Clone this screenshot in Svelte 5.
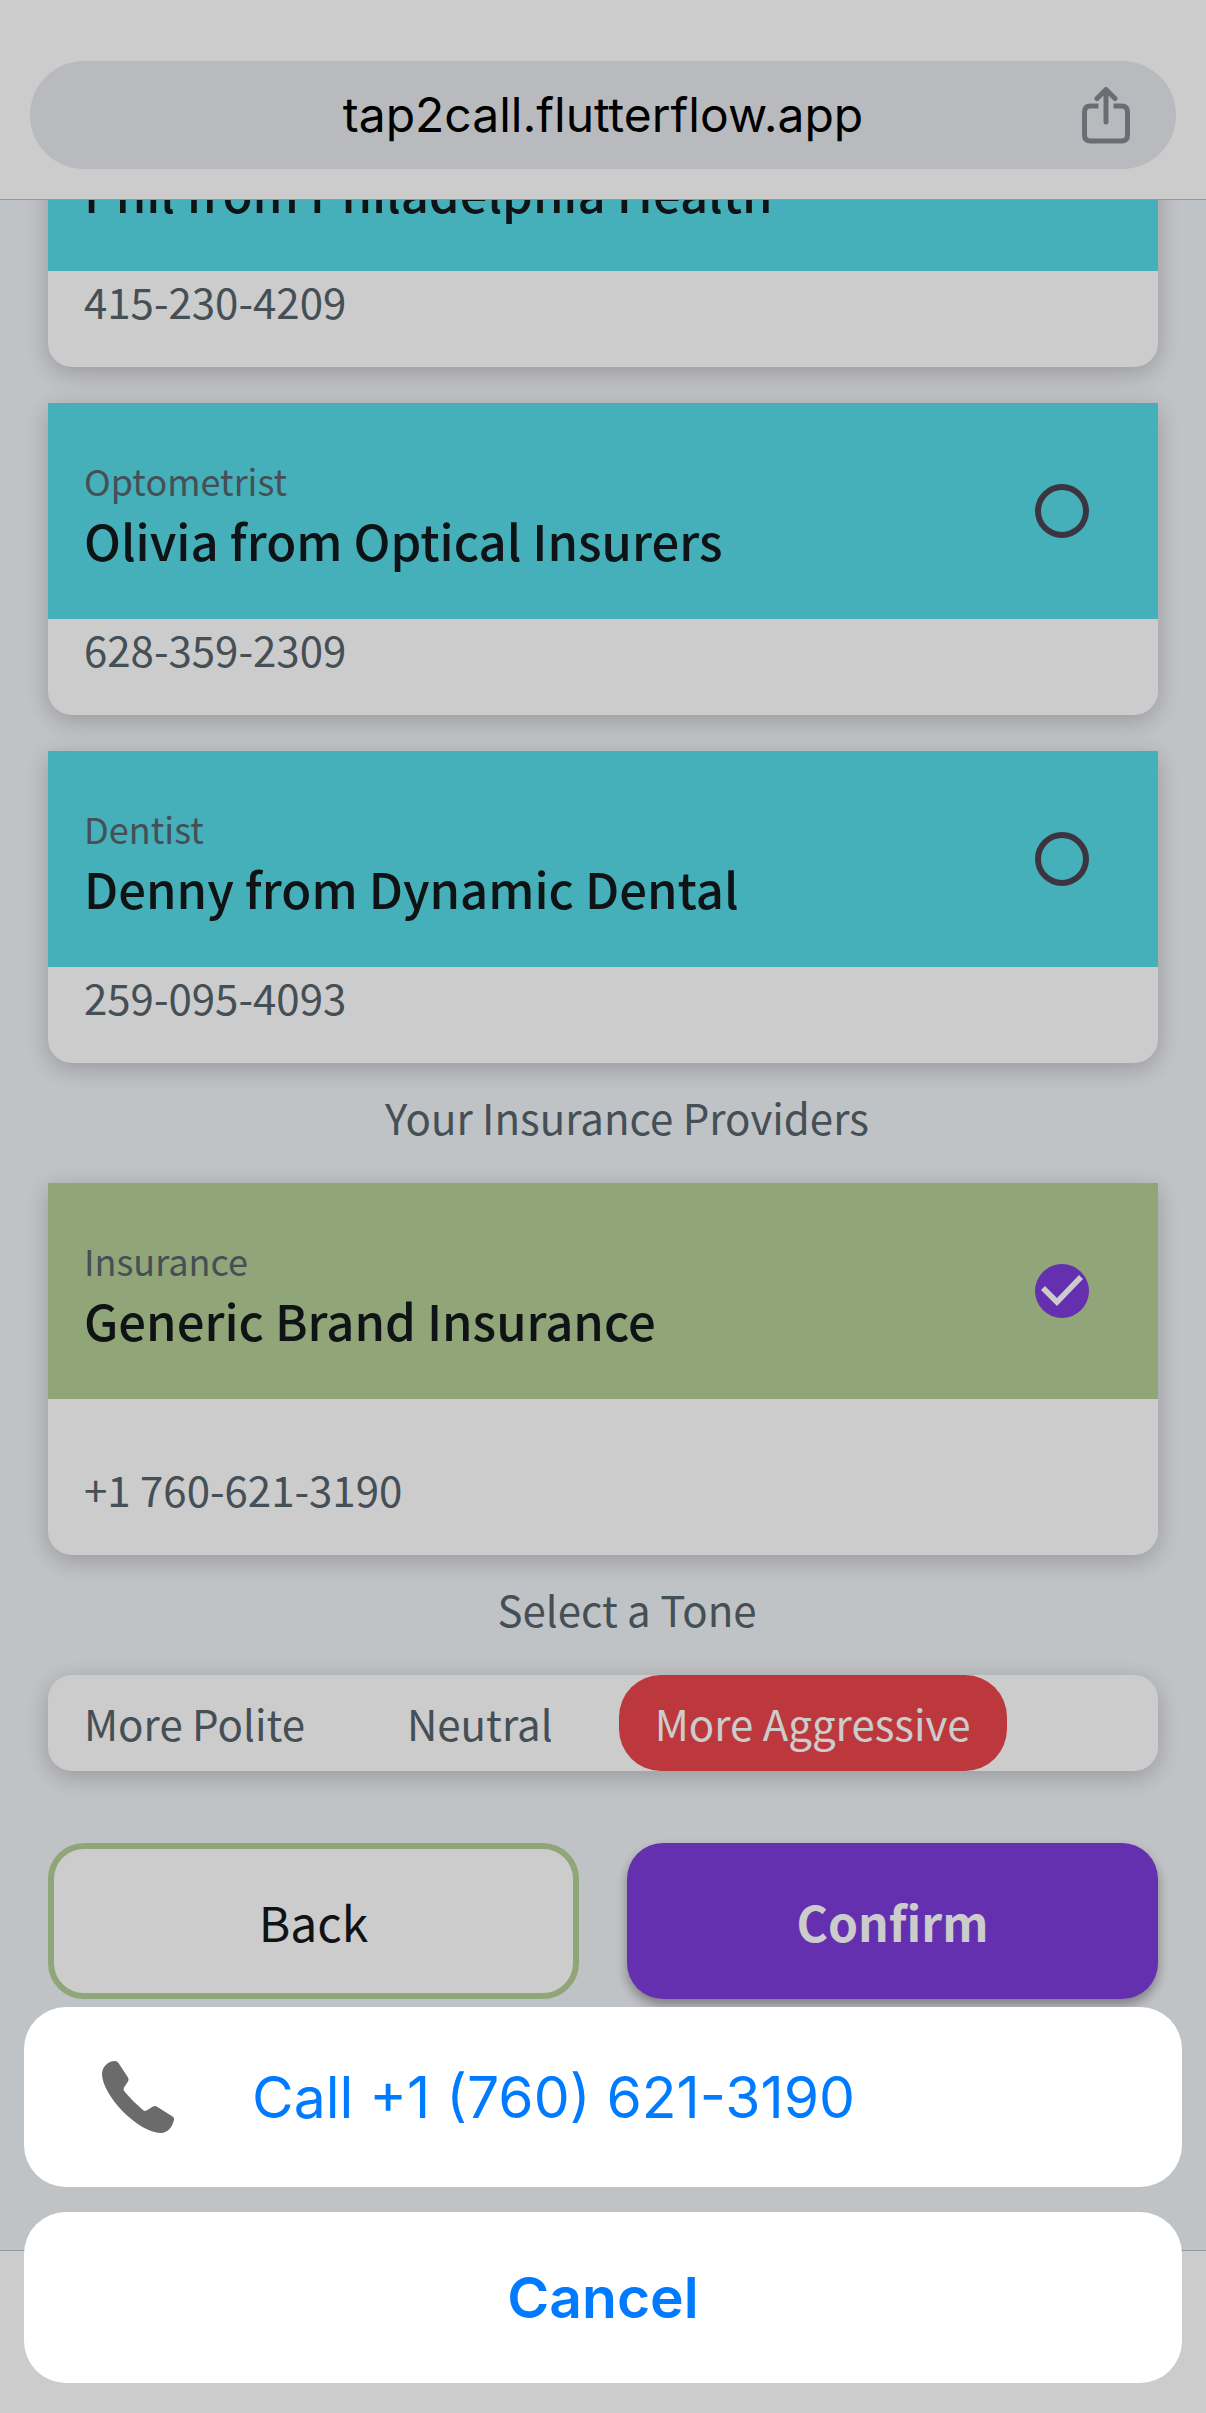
<script lang="ts">
  interface Provider {
    category?: string;
    name: string;
    phone: string;
  }

  const doctors: Provider[] = [
    { name: 'Phil from Philadelphia Health', phone: '415-230-4209' },
    { category: 'Optometrist', name: 'Olivia from Optical Insurers', phone: '628-359-2309' },
    { category: 'Dentist', name: 'Denny from Dynamic Dental', phone: '259-095-4093' }
  ];

  const insurers: Provider[] = [
    { category: 'Insurance', name: 'Generic Brand Insurance', phone: '+1 760-621-3190' }
  ];

  const tones = ['More Polite', 'Neutral', 'More Aggressive'];

  let selected: string[] = $state(['Generic Brand Insurance']);
  let tone: string = $state('More Aggressive');
  let sheetOpen: boolean = $state(true);
</script>

{#snippet card(provider: Provider, kind: string)}
  <article class="card {kind}">
    <label class="card-header">
      <span class="card-title">
        {#if provider.category}
          <span class="category">{provider.category}</span>
        {/if}
        <span class="name">{provider.name}</span>
      </span>
      {#if provider.category}
        <input type="checkbox" value={provider.name} bind:group={selected} />
      {/if}
    </label>
    <p class="phone">{provider.phone}</p>
  </article>
{/snippet}

<div class="screen">
  <header class="browser-bar">
    <div class="address">
      <span class="host">tap2call.flutterflow.app</span>
      <button class="share" aria-label="Share">
        <svg viewBox="0 0 48 57" width="48" height="57" fill="none" stroke="currentColor" stroke-width="5" stroke-linecap="round" stroke-linejoin="round">
          <path d="M24 35V3M15 11.500L24 2.500L33 11.500" />
          <path d="M16.500 19H8.500Q2.500 19 2.500 25V48Q2.500 54 8.500 54H39.500Q45.500 54 45.500 48V25Q45.500 19 39.500 19H31.500" stroke-linecap="butt" />
        </svg>
      </button>
    </div>
  </header>

  <div class="viewport">
    <main class="content">
      <div class="card-list">
        {#each doctors as doctor}
          {@render card(doctor, 'doctor')}
        {/each}
      </div>

      <h2>Your Insurance Providers</h2>
      <div class="card-list">
        {#each insurers as insurer}
          {@render card(insurer, 'insurer')}
        {/each}
      </div>

      <h2>Select a Tone</h2>
      <div class="tones">
        {#each tones as option}
          <button class="tone" class:active={tone === option} onclick={() => (tone = option)}>
            {option}
          </button>
        {/each}
      </div>

      <div class="actions">
        <button class="back">Back</button>
        <button class="confirm" onclick={() => (sheetOpen = true)}>Confirm</button>
      </div>
    </main>
  </div>

  <footer class="toolbar"></footer>
</div>

{#if sheetOpen}
  <div class="backdrop"></div>
  <div class="sheet">
    <a class="sheet-call" href="tel:+17606213190">
      <svg viewBox="0 0 72 72" width="72" height="72" fill="#6b6b6b">
        <path d="M0 13C0 6 6 0 13 0Q15 0 16.500 2L26 16.500Q27 18.500 26 20.500L22 26.500Q21 28.500 22.500 30.500Q31 41 41 49Q42.500 50.500 44.500 49.500L51 45.500Q53.500 44.500 55.500 46L70.500 55.500Q72.500 57 72 59C70 67 65 72 59 72C36 72 0 34 0 13Z" />
      </svg>
      <span>Call +1 (760) 621-3190</span>
    </a>
    <button class="sheet-cancel" onclick={() => (sheetOpen = false)}>Cancel</button>
  </div>
{/if}

<style>
  :global(body) {
    margin: 0;
    background: #f1f4f8;
  }

  .screen {
    display: flex;
    flex-direction: column;
    min-height: 100vh;
    color: #57636c;
    font-family: 'Noto Sans CJK SC', 'Noto Sans', sans-serif;
    font-size: 42px;
    line-height: 60px;
  }

  button {
    margin: 0;
    border: none;
    font: inherit;
    cursor: pointer;
  }

  .browser-bar {
    padding: 61px 30px 30px;
    background: #fff;
    border-bottom: 1px solid #bbbdc0;
  }

  .address {
    position: relative;
    display: flex;
    align-items: center;
    justify-content: center;
    height: 108px;
    border-radius: 54px;
    background: #e8e9ee;
    color: #000;
    font-family: Inter, 'Liberation Sans', sans-serif;
    font-size: 48px;
  }

  .share {
    position: absolute;
    right: 46px;
    padding: 0;
    background: none;
    color: #838a90;
    line-height: 0;
  }

  .viewport {
    flex: 1;
    overflow: hidden;
    background: #f1f4f8;
  }

  /* the list is scrolled a little under the browser bar */
  .content {
    margin-top: -87px;
    padding: 0 48px 48px;
  }

  .card-list {
    display: flex;
    flex-direction: column;
    gap: 36px;
  }

  .card {
    border-radius: 0 0 24px 24px;
    background: #fff;
    box-shadow: 0 6px 24px rgba(20, 0, 20, 0.22);
  }

  .card-header {
    display: flex;
    align-items: center;
    justify-content: space-between;
    padding: 48px 69px 48px 36px;
  }

  .doctor .card-header {
    background: #58dde9;
  }

  .insurer .card-header {
    background: #b4cf96;
  }

  .card-title {
    display: flex;
    flex-direction: column;
  }

  .category {
    font-size: 36px;
    line-height: 58px;
  }

  .name {
    color: #14181b;
    font-size: 49px;
    font-weight: 500;
    line-height: 62px;
  }

  input {
    appearance: none;
    flex: none;
    box-sizing: border-box;
    width: 54px;
    height: 54px;
    margin: 0;
    border: 6px solid #4b4351;
    border-radius: 50%;
  }

  input:checked {
    border: none;
    background: #7e3cdc;
  }

  input:checked::after {
    content: '';
    display: block;
    width: 54px;
    height: 54px;
    background: #fff;
    clip-path: polygon(6px 26px, 10px 22px, 22px 34px, 44px 11px, 48px 15px, 22px 42px);
  }

  .phone {
    margin: 0;
    padding: 0 36px 36px;
  }

  .insurer .phone {
    padding-top: 60px;
  }

  h2 {
    margin: 24px 0 36px;
    padding-left: 48px;
    font-size: 42px;
    font-weight: 400;
    text-align: center;
  }

  .tones {
    display: flex;
    gap: 30px;
    border-radius: 24px;
    background: #fff;
    box-shadow: 0 6px 24px rgba(20, 0, 20, 0.22);
  }

  .tone {
    padding: 18px 36px;
    border-radius: 42px;
    background: none;
    color: #57636c;
  }

  .tone.active {
    background: #eb464b;
    color: #fff;
  }

  .actions {
    display: grid;
    grid-template-columns: 1fr 1fr;
    gap: 48px;
    margin-top: 72px;
  }

  .back,
  .confirm {
    height: 156px;
    border-radius: 36px;
    font-size: 48px;
  }

  .back {
    border: 6px solid #b4cf96;
    background: #fff;
    color: #14181b;
  }

  .confirm {
    background: #7e3cdc;
    box-shadow: 0 6px 12px rgba(0, 0, 0, 0.35);
    color: #fff;
    font-weight: 700;
  }

  .toolbar {
    height: 162px;
    border-top: 1px solid #bbbdc0;
    background: #fff;
  }

  .backdrop {
    position: fixed;
    inset: 0;
    background: rgba(0, 0, 0, 0.2);
  }

  .sheet {
    position: fixed;
    right: 24px;
    bottom: 30px;
    left: 24px;
    display: flex;
    flex-direction: column;
    gap: 25px;
    font-family: Inter, 'Liberation Sans', sans-serif;
    font-size: 57px;
  }

  .sheet-call,
  .sheet-cancel {
    border-radius: 42px;
    background: #fff;
    color: #007aff;
  }

  .sheet-call {
    display: flex;
    align-items: center;
    gap: 78px;
    height: 180px;
    padding: 0 78px;
    text-decoration: none;
  }

  .sheet-cancel {
    height: 171px;
    font-weight: 600;
  }
</style>
